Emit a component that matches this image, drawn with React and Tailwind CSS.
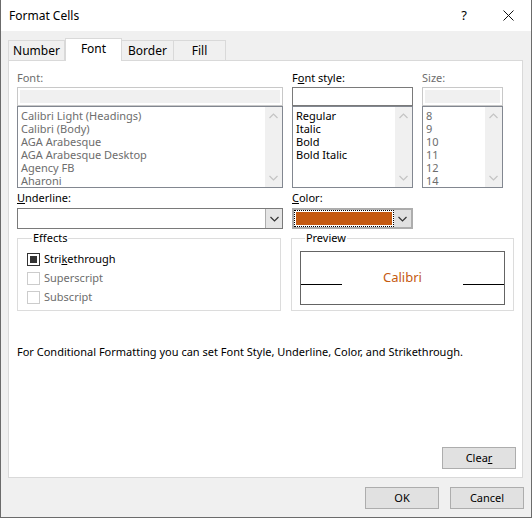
import React from 'react';

const fontList = [
  'Calibri Light (Headings)',
  'Calibri (Body)',
  'AGA Arabesque',
  'AGA Arabesque Desktop',
  'Agency FB',
  'Aharoni',
];
const styleList = ['Regular', 'Italic', 'Bold', 'Bold Italic'];
const sizeList = ['8', '9', '10', '11', '12', '14'];

function Chevron({ up, color = '#c4c4c4' }) {
  return (
    <svg width="9" height="6" viewBox="0 0 9 6">
      <path
        d={up ? 'M0.5 5 L4.5 1 L8.5 5' : 'M0.5 1 L4.5 5 L8.5 1'}
        fill="none"
        stroke={color}
        strokeWidth="1.2"
      />
    </svg>
  );
}

function ListBox({ width, children }) {
  return (
    <div
      className="flex h-[82px] border border-[#828790] bg-white"
      style={{ width }}>
      <div className="flex flex-1 flex-col overflow-hidden pl-[3px] pt-[2px] leading-[13px]">
        {children}
      </div>
      <div className="flex w-[17px] flex-col items-center justify-between bg-[#f0f0f0] pt-[6px] pb-[6px]">
        <Chevron up />
        <Chevron />
      </div>
    </div>
  );
}

function Checkbox({ label, checked, disabled }) {
  return (
    <div className="flex h-[19px] items-center gap-[4px]">
      <div
        className={
          'flex h-[13px] w-[13px] items-center justify-center border ' +
          (disabled ? 'border-[#cccccc] bg-white' : 'border-[#333333] bg-white')
        }>
        {checked && <div className="h-[7px] w-[7px] bg-[#333333]" />}
      </div>
      <span className={disabled ? 'text-[#6d6d6d]' : 'text-black'}>{label}</span>
    </div>
  );
}

function Button({ children, className = '' }) {
  return (
    <div
      className={
        'flex h-[22px] w-[74px] items-center justify-center border border-[#adadad] bg-[#e1e1e1] ' +
        className
      }>
      {children}
    </div>
  );
}

export default function App() {
  return (
    <div
      className="flex h-[518px] w-[532px] flex-col border-x border-b border-[#6b6b6b] bg-[#f0f0f0] text-[11px] text-black"
      style={{ fontFamily: '"Noto Sans", "Open Sans", sans-serif' }}>
      {/* title bar */}
      <div className="flex h-[31px] items-center bg-white pl-[8px] pr-[17px]">
        <span className="flex-1 text-[12px]">Format Cells</span>
        <span className="mr-[36px] text-[13px]">?</span>
        <svg width="11" height="11" viewBox="0 0 11 11">
          <path d="M0.5 0.5 L10.5 10.5 M10.5 0.5 L0.5 10.5" stroke="#111" strokeWidth="1" />
        </svg>
      </div>

      {/* tabs */}
      <div className="mt-[7px] flex h-[22px] items-end pl-[7px] text-[12px]">
        <div className="flex h-[20px] w-[57px] items-center justify-center border border-b-0 border-[#d9d9d9] bg-[#f0f0f0]">
          Number
        </div>
        <div className="relative z-10 -mb-px flex h-[23px] w-[57px] items-center justify-center border border-b-0 border-[#d9d9d9] bg-white pb-[3px]">
          Font
        </div>
        <div className="flex h-[20px] w-[52px] items-center justify-center border border-b-0 border-l-0 border-[#d9d9d9] bg-[#f0f0f0]">
          Border
        </div>
        <div className="flex h-[20px] w-[52px] items-center justify-center border border-b-0 border-l-0 border-[#d9d9d9] bg-[#f0f0f0]">
          Fill
        </div>
      </div>

      {/* panel */}
      <div className="ml-[7px] mr-[8px] flex h-[418px] flex-col border border-[#d9d9d9] bg-white px-[8px]">
        {/* font / style / size */}
        <div className="mt-[9px] flex gap-[9px]">
          <div className="flex flex-col">
            <span className="h-[17px] leading-[15px] text-[#6d6d6d]">Font:</span>
            <div className="h-[19px] w-[266px] border border-[#c8c8c8] bg-white p-[2px]">
              <div className="h-full bg-[#f0f0f0]" />
            </div>
            <ListBox width={266}>
              {fontList.map(f => (
                <span key={f} className="whitespace-nowrap text-[#6d6d6d]">
                  {f}
                </span>
              ))}
            </ListBox>
          </div>
          <div className="flex flex-col">
            <span className="h-[17px] leading-[15px]">
              F<span className="underline">o</span>nt style:
            </span>
            <div className="h-[19px] w-[121px] border border-[#7a7a7a] bg-white" />
            <ListBox width={121}>
              {styleList.map(s => (
                <span key={s}>{s}</span>
              ))}
            </ListBox>
          </div>
          <div className="flex flex-col">
            <span className="h-[17px] leading-[15px] text-[#6d6d6d]">Size:</span>
            <div className="h-[19px] w-[81px] border border-[#c8c8c8] bg-white p-[2px]">
              <div className="h-full bg-[#f0f0f0]" />
            </div>
            <ListBox width={81}>
              {sizeList.map(s => (
                <span key={s} className="text-[#6d6d6d]">
                  {s}
                </span>
              ))}
            </ListBox>
          </div>
        </div>

        {/* underline / color */}
        <div className="mt-[1px] flex gap-[9px]">
          <div className="flex flex-col">
            <span className="h-[19px] leading-[18px]">
              <span className="underline">U</span>nderline:
            </span>
            <div className="flex h-[21px] w-[266px] border border-[#7a7a7a] bg-white">
              <div className="flex-1" />
              <div className="flex w-[17px] items-center justify-center border-l border-[#adadad] bg-[#e5e5e5]">
                <Chevron color="#333" />
              </div>
            </div>
          </div>
          <div className="flex flex-col">
            <span className="h-[19px] leading-[18px]">
              <span className="underline">C</span>olor:
            </span>
            <div className="flex h-[21px] w-[121px] border-2 border-[#adadad] bg-white">
              <div className="flex-1 border border-dotted border-black p-[1px]">
                <div className="h-full bg-[#c55a11]" />
              </div>
              <div className="flex w-[17px] items-center justify-center bg-[#e1e1e1]">
                <Chevron color="#333" />
              </div>
            </div>
          </div>
        </div>

        {/* effects / preview */}
        <div className="mt-[2px] flex gap-[10px]">
          <fieldset className="h-[80px] w-[265px] border border-[#dcdcdc] pl-[9px] pt-[5px]">
            <legend className="ml-[5px] px-[1px] leading-[14px]">Effects</legend>
            <Checkbox
              checked
              label={
                <>
                  Stri<span className="underline">k</span>ethrough
                </>
              }
            />
            <Checkbox disabled label="Superscript" />
            <Checkbox disabled label="Subscript" />
          </fieldset>
          <fieldset className="h-[80px] w-[224px] border border-[#dcdcdc] px-[8px] pt-[6px]">
            <legend className="ml-[5px] px-[1px] leading-[14px]">Preview</legend>
            <div className="flex h-[54px] items-center border border-[#646464]">
              <div className="mt-[12px] h-px w-[41px] bg-black" />
              <span className="flex-1 text-center text-[13px] text-[#c55a11]">Calibri</span>
              <div className="mt-[12px] h-px w-[41px] bg-black" />
            </div>
          </fieldset>
        </div>

        <p className="mt-[33px] whitespace-nowrap">
          For Conditional Formatting you can set Font Style, Underline, Color, and Strikethrough.
        </p>

        <div className="mt-auto mb-[8px] flex justify-end">
          <Button className="-mr-[2px]">
            Clea<span className="underline">r</span>
          </Button>
        </div>
      </div>

      {/* dialog buttons */}
      <div className="mt-[9px] flex justify-end gap-[11px] pr-[7px]">
        <Button>OK</Button>
        <Button>Cancel</Button>
      </div>
    </div>
  );
}
